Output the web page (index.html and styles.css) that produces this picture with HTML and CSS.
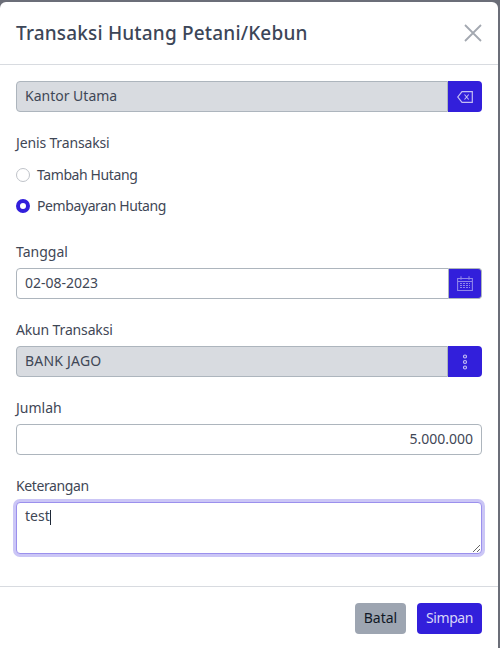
FILE: index.html
```html
<!DOCTYPE html>
<html lang="id">
<head>
<meta charset="utf-8">
<title>Transaksi Hutang Petani/Kebun</title>
<link rel="stylesheet" href="styles.css">
</head>
<body>
<div class="modal">
  <header class="modal-header">
    <h1 class="modal-title">Transaksi Hutang Petani/Kebun</h1>
    <button class="close" aria-label="Tutup">
      <svg width="18" height="18" viewBox="0 0 18 18"><path d="M1 1l16 16M17 1L1 17" fill="none" stroke="#a3a8b0" stroke-width="1.8"/></svg>
    </button>
  </header>
  <div class="modal-body">
    <div class="group-input first">
      <div class="input disabled">Kantor Utama</div>
      <span class="addon">
        <svg width="16" height="12" viewBox="0 0 16 12"><path d="M5 .7h10.300v10.600H5L.8 6z" fill="none" stroke="#c4bef3" stroke-width="1.200"/><path d="M7.500 3.500l4.200 5M11.700 3.500l-4.200 5" fill="none" stroke="#c4bef3" stroke-width="1.100"/></svg>
      </span>
    </div>
    <div class="field-label jenis tight">Jenis Transaksi</div>
    <div class="radio-row"><span class="radio"></span><span class="tighter">Tambah Hutang</span></div>
    <div class="radio-row"><span class="radio checked"></span><span class="tighter">Pembayaran Hutang</span></div>
    <div class="field-label tanggal">Tanggal</div>
    <div class="group-input">
      <div class="input">02-08-2023</div>
      <span class="addon bordered">
        <svg width="16" height="15" viewBox="0 0 16 15"><path d="M.6 2.500h14.800v12H.6zM.6 5.500h14.800M4 .3v3.500M12 .3v3.500" fill="none" stroke="#8f86ea" stroke-width="1.100"/><path d="M3 7.500h10M3 9.500h10M3 11.500h10" stroke="#8f86ea" stroke-width="1.100" stroke-dasharray="2 1"/></svg>
      </span>
    </div>
    <div class="field-label akun tight">Akun Transaksi</div>
    <div class="group-input">
      <div class="input disabled wide">BANK JAGO</div>
      <span class="addon">
        <svg width="6" height="16" viewBox="0 0 6 16"><g fill="none" stroke="#c4bef3" stroke-width="1.200"><circle cx="3" cy="2.500" r="1.500"/><circle cx="3" cy="8" r="1.500"/><circle cx="3" cy="13.500" r="1.500"/></g></svg>
      </span>
    </div>
    <div class="field-label jumlah">Jumlah</div>
    <div class="input amount">5.000.000</div>
    <div class="field-label ket tighter">Keterangan</div>
    <div class="textarea-wrap">
      <textarea class="textarea">test</textarea>
      <span class="caret"></span>
    </div>
  </div>
  <footer class="modal-footer">
    <button class="btn btn-gray">Batal</button>
    <button class="btn btn-primary tighter">Simpan</button>
  </footer>
</div>
</body>
</html>
```
FILE: styles.css
```css
* { box-sizing: border-box; }
html, body { margin: 0; height: 648px; overflow: hidden; }
body { background: #6b6e78; padding: 2px 2px 0 0; font-family: "Noto Sans", sans-serif; color: #3f4756; font-size: 14px; }
.modal { background: #fff; height: 646px; border-radius: 6px 6px 0 0; display: flex; flex-direction: column; }
.modal-header { height: 63px; padding: 0 16px; display: flex; align-items: center; justify-content: space-between; border-bottom: 1px solid #d8dbe0; flex: none; }
.modal-title { margin: 0; font-size: 19px; font-weight: 500; letter-spacing: .17px; color: #3c4658; }
.close { background: none; border: 0; padding: 0; width: 18px; height: 18px; display: block; }
.modal-body { padding: 16px 16px 0; height: 521px; flex: none; }
.group-input { display: flex; height: 31px; }
.input { flex: 1; height: 31px; border: 1px solid #adb5bd; border-radius: 4px 0 0 4px; padding: 0 8px 2px; display: flex; align-items: center; background: #fff; min-width: 0; }
.input.disabled { background: #d8dbe0; }
.input.wide { letter-spacing: .2px; }
.addon { width: 34px; flex: none; background: #321fdb; border-radius: 0 4px 4px 0; display: flex; align-items: center; justify-content: center; }
.addon.bordered { width: 33px; border: 1px solid #adb5bd; border-left: 0; }
.field-label { line-height: 20px; }
.tight { letter-spacing: -.15px; }
.tighter { letter-spacing: -.4px; }
.jenis { margin-top: 21px; }
.radio-row { display: flex; align-items: center; gap: 7px; height: 20px; margin-top: 11px; line-height: 17px; }
.radio-row + .radio-row { margin-top: 11px; }
.radio { width: 14px; height: 14px; border-radius: 50%; border: 1px solid #bfc3c9; background: #fff; flex: none; margin-top: 2px; }
.radio.checked { border: 4px solid #321fdb; }
.tanggal { margin-top: 27px; margin-bottom: 6px; }
.akun { margin-top: 21px; margin-bottom: 6px; }
.jumlah { margin-top: 21px; margin-bottom: 6px; }
.ket { margin-top: 21px; margin-bottom: 6px; }
.input.amount { border-radius: 4px; justify-content: flex-end; }
.textarea-wrap { position: relative; }
.textarea { display: block; width: 100%; height: 52px; border: 1px solid #9b90ed; border-radius: 4px; padding: 3px 8px; font: inherit; color: inherit; outline: 0; box-shadow: 0 0 0 3px #cbc6f6; resize: vertical; }
.caret { position: absolute; left: 34px; top: 8px; width: 1px; height: 15px; background: #1f2937; }
.modal-footer { border-top: 1px solid #d8dbe0; flex: 1; padding: 16px 16px 0 0; display: flex; justify-content: flex-end; align-items: flex-start; gap: 11px; }
.btn { height: 31px; border: 0; border-radius: 4px; font: inherit; padding: 0 0 2px; }
.btn-gray { width: 51px; background: #9da5b1; color: #111827; }
.btn-primary { width: 65px; background: #321fdb; color: #d9d6f8; }
```
